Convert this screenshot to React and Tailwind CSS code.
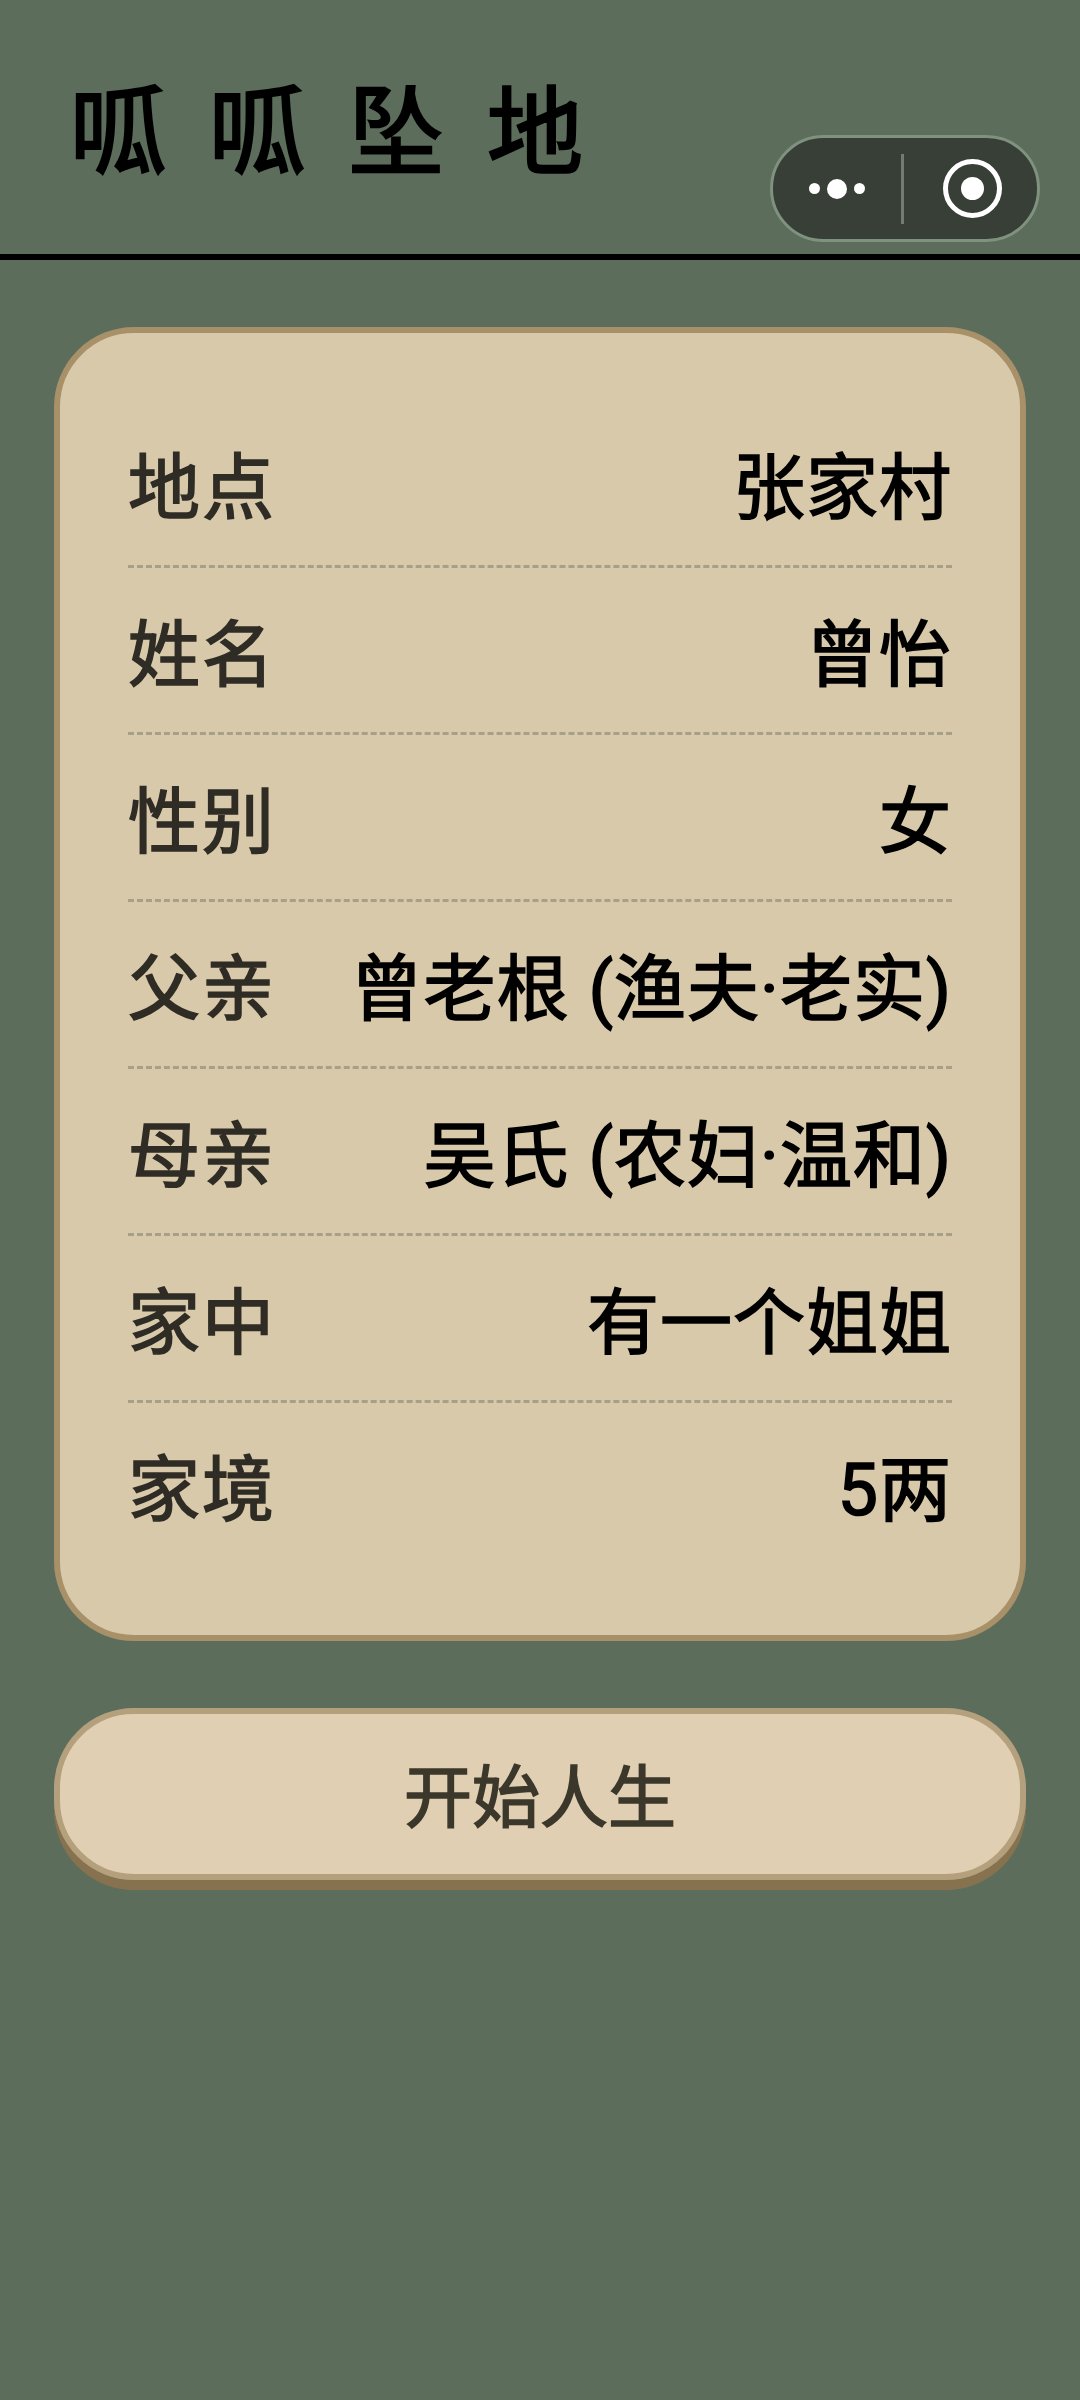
import React from "react";

const rows = [
  { label: "地点", value: "张家村" },
  { label: "姓名", value: "曾怡" },
  { label: "性别", value: "女" },
  { label: "父亲", value: "曾老根 (渔夫·老实)" },
  { label: "母亲", value: "吴氏 (农妇·温和)" },
  { label: "家中", value: "有一个姐姐" },
  { label: "家境", value: "5两" },
];

const CapsuleMenu = () => (
  <div className="absolute left-[770px] top-[135px] flex h-[107px] w-[270px] items-center rounded-full border-[3px] border-[#7f917f] bg-[#383f36]">
    <div className="flex w-[128px] items-center justify-center gap-[7px]">
      <span className="h-[11px] w-[11px] rounded-full bg-white" />
      <span className="h-[20px] w-[20px] rounded-full bg-white" />
      <span className="h-[11px] w-[11px] rounded-full bg-white" />
    </div>
    <div className="h-[70px] w-[3px] bg-[#727d70]" />
    <div className="flex flex-1 items-center justify-center pl-[4px]">
      <div className="flex h-[59px] w-[59px] items-center justify-center rounded-full border-[5px] border-white">
        <span className="h-[23px] w-[23px] rounded-full bg-white" />
      </div>
    </div>
  </div>
);

const App = () => {
  return (
    <div className="relative min-h-[2400px] bg-[#5c6d5b] font-['Roboto','Noto_Sans_CJK_SC',sans-serif]">
      <header className="flex h-[260px] items-start border-b-[6px] border-black pl-[70px] pt-[75px]">
        <h1 className="text-[96px] font-normal leading-[116px] tracking-[43px] text-black [-webkit-text-stroke:2.5px]">呱呱坠地</h1>
      </header>
      <CapsuleMenu />

      <main className="px-[54px] pt-[67px]">
        <div className="rounded-[80px] border-[6px] border-[#a89068] bg-[#d8c9aa] p-[68px]">
          {rows.map((row, i) => (
            <div
              key={row.label}
              className={
                "flex items-center justify-between pb-[28px] pt-[40px] text-[72px] leading-[96px]" +
                (i < rows.length - 1 ? " border-b-[3px] border-dashed border-[#a89f88]" : "")
              }
            >
              <span className="font-normal tracking-[2px] text-[#2f2c25] [-webkit-text-stroke:1.6px]">{row.label}</span>
              <span className="font-normal tracking-[1px] text-black [-webkit-text-stroke:1.6px]">{row.value}</span>
            </div>
          ))}
        </div>

        <button className="mt-[67px] flex h-[172px] w-full items-center justify-center rounded-[80px] border-[6px] border-[#b5a07d] bg-[#e0cfb2] pt-[10px] text-[68px] font-normal text-[#3b382b] shadow-[0_10px_0_#877250] [-webkit-text-stroke:1.6px]">
          开始人生
        </button>
      </main>
    </div>
  );
};

export default App;
